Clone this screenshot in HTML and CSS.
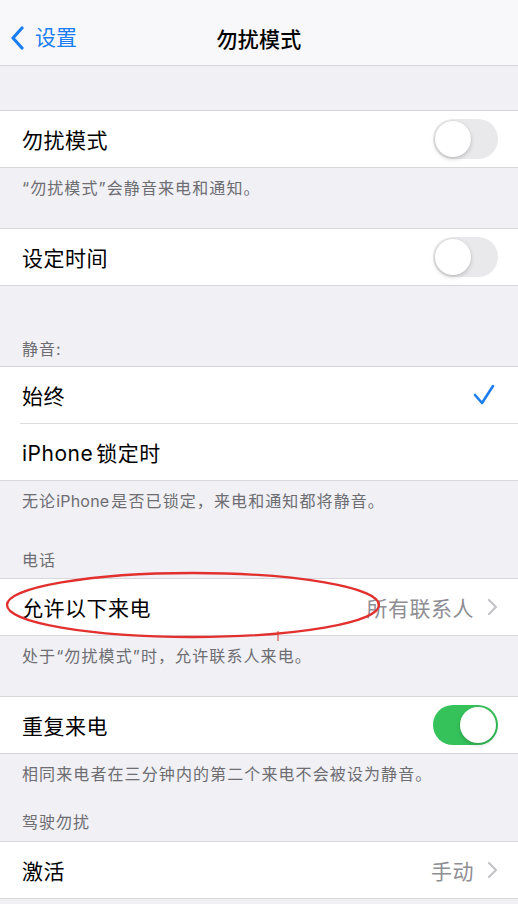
FILE: index.html
```html
<!DOCTYPE html>
<html lang="zh-CN">
<head>
<meta charset="utf-8">
<title>勿扰模式</title>
<link rel="stylesheet" href="styles.css">
</head>
<body>
<div class="page">
  <header class="nav">
    <div class="back">
      <svg class="back-chev" width="16" height="24" viewBox="0 0 16 24"><path d="M12 2 L3 12 L12 22" fill="none" stroke="#1a7ef0" stroke-width="3.2" stroke-linecap="round" stroke-linejoin="round"/></svg>
      <span>设置</span>
    </div>
    <div class="title">勿扰模式</div>
  </header>

  <div class="top-gap"></div>

  <div class="group">
    <div class="row">
      <span class="label">勿扰模式</span>
      <span class="switch"><span class="knob"></span></span>
    </div>
  </div>
  <div class="note">“勿扰模式”会静音来电和通知。</div>

  <div class="group">
    <div class="row">
      <span class="label">设定时间</span>
      <span class="switch"><span class="knob"></span></span>
    </div>
  </div>

  <div class="sect-h h-mute">静音:</div>
  <div class="group">
    <div class="row">
      <span class="label">始终</span>
      <svg class="check" width="22" height="22" viewBox="0 0 22 22"><path d="M2 11 L9 19 L20 2" fill="none" stroke="#1a7ef0" stroke-width="2.6" stroke-linecap="round" stroke-linejoin="round"/></svg>
    </div>
    <div class="sep"></div>
    <div class="row">
      <span class="label"><span class="latin">iPhone</span>锁定时</span>
    </div>
  </div>
  <div class="note tight">无论<span class="latin-s">iPhone</span>是否已锁定，来电和通知都将静音。</div>

  <div class="sect-h h-phone">电话</div>
  <div class="group">
    <div class="row annotated">
      <span class="label">允许以下来电</span>
      <span class="detail">所有联系人<svg class="chev" width="12" height="18" viewBox="0 0 12 18"><path d="M3 2 L10 9 L3 16" fill="none" stroke="#c4c4c8" stroke-width="2.2" stroke-linecap="round" stroke-linejoin="round"/></svg></span>
      <svg class="mark" width="400" height="80" viewBox="0 0 400 80"><ellipse cx="193" cy="36" rx="186" ry="32" fill="none" stroke="#e2302f" stroke-width="2.3"/><path d="M278 62 L278 72" stroke="#e2302f" stroke-width="1"/></svg>
    </div>
  </div>
  <div class="note">处于“勿扰模式”时，允许联系人来电。</div>

  <div class="group">
    <div class="row">
      <span class="label">重复来电</span>
      <span class="switch on"><span class="knob"></span></span>
    </div>
  </div>
  <div class="note tight">相同来电者在三分钟内的第二个来电不会被设为静音。</div>

  <div class="sect-h h-drive">驾驶勿扰</div>
  <div class="group">
    <div class="row">
      <span class="label">激活</span>
      <span class="detail">手动<svg class="chev" width="12" height="18" viewBox="0 0 12 18"><path d="M3 2 L10 9 L3 16" fill="none" stroke="#c4c4c8" stroke-width="2.2" stroke-linecap="round" stroke-linejoin="round"/></svg></span>
    </div>
  </div>
</div>
</body>
</html>
```

FILE: styles.css
```css
* { box-sizing: border-box; }
html, body {
  margin: 0;
  padding: 0;
  background: #f0f0f5;
}
body {
  font-family: "Inter", "Noto Sans CJK SC", "Noto Sans", sans-serif;
  color: #000;
}
.page {
  width: 518px;
  min-height: 904px;
  background: #f0f0f5;
  overflow: hidden;
}
.nav {
  height: 66px;
  background: #f8f8fa;
  border-bottom: 1px solid #d6d6da;
  display: flex;
  align-items: center;
  justify-content: center;
  position: relative;
}
.back {
  position: absolute;
  left: 10px;
  top: 26px;
  display: flex;
  align-items: center;
  gap: 9px;
  color: #1a7ef0;
  font-size: 21px;
  line-height: 24px;
}
.title {
  font-size: 21px;
  font-weight: 500;
  letter-spacing: 0.3px;
  margin-top: 10px;
}
.top-gap { height: 44px; }
.group {
  background: #fff;
  border-top: 1px solid #d8d8dc;
  border-bottom: 1px solid #d8d8dc;
}
.row {
  height: 56px;
  display: flex;
  align-items: center;
  justify-content: space-between;
  padding: 0 20px 0 22px;
}
.label {
  font-size: 21px;
  letter-spacing: 0.5px;
}
.latin { margin-right: 3px; }
.latin-s { letter-spacing: 0.2px; margin-right: 2px; }
.sep {
  height: 1px;
  margin-left: 20px;
  background: #dcdce0;
}
.note {
  padding: 9px 22px 29px;
  font-size: 16px;
  line-height: 22px;
  letter-spacing: 1.1px;
  color: #6d6d72;
}
.note.tight { padding-bottom: 0; }
.sect-h {
  padding: 0 22px 7px;
  font-size: 16px;
  line-height: 22px;
  letter-spacing: 1px;
  color: #6d6d72;
}
.h-mute { padding-top: 52px; padding-bottom: 6px; }
.h-phone { padding-top: 37px; }
.h-drive { padding-top: 26px; padding-bottom: 8px; }
.switch {
  width: 65px;
  height: 40px;
  border-radius: 20px;
  background: #e9e9eb;
  position: relative;
  display: inline-block;
}
.switch .knob {
  position: absolute;
  top: 2px;
  left: 2px;
  width: 36px;
  height: 36px;
  border-radius: 50%;
  background: #fff;
  box-shadow: 0 2px 4px rgba(0,0,0,0.18), 0 0 0 0.5px rgba(0,0,0,0.06);
}
.switch.on { background: #35c25a; }
.switch.on .knob { left: 27px; }
.check { margin-right: 3px; }
.detail {
  display: flex;
  align-items: center;
  gap: 12px;
  font-size: 21px;
  letter-spacing: 0.5px;
  color: #8e8e93;
}
.annotated { position: relative; }
.mark {
  position: absolute;
  left: 0;
  top: -10px;
  pointer-events: none;
}
```
